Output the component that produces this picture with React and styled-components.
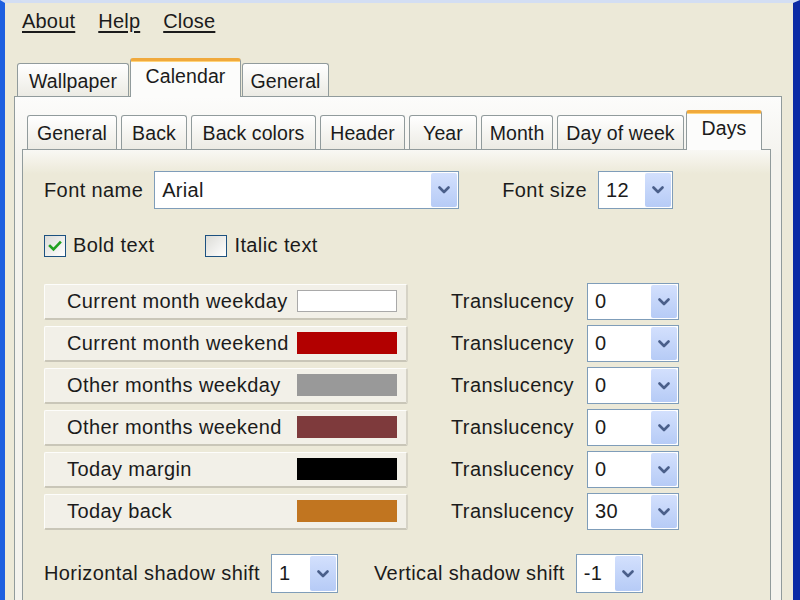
import React from "react";
import styled, { createGlobalStyle, css } from "styled-components";

const Global = createGlobalStyle`
  html, body { margin: 0; padding: 0; background: #ece9d8; }
  * { box-sizing: border-box; }
`;

const Window = styled.div`
  width: 800px;
  height: 600px;
  overflow: hidden;
  display: flex;
  flex-direction: column;
  background: #ece9d8;
  border-left: 5px solid #1d5fe0;
  border-right: 7px solid #0b2aa5;
  border-top: 3px solid #d3def3;
  font-family: "Liberation Sans", Arial, sans-serif;
  color: #1b1b1b;
`;

const MenuBar = styled.div`
  height: 55px;
  display: flex;
  gap: 23px;
  padding: 7px 0 0 17px;
  font-size: 20px;
`;

const MenuItem = styled.span`
  text-decoration: underline;
  text-underline-offset: 3px;
  letter-spacing: 0.2px;
`;

const TabStrip = styled.div`
  position: relative;
  z-index: 1;
  display: flex;
  align-items: flex-end;
  gap: ${(p) => p.$gap}px;
  padding-left: ${(p) => p.$left}px;
  margin-bottom: -1px;
`;

const Tab = styled.div`
  width: ${(p) => p.$w}px;
  display: flex;
  align-items: center;
  justify-content: center;
  font-size: 19.5px;
  letter-spacing: 0.1px;
  border: 1px solid #919b9c;
  border-bottom: none;
  border-radius: 3px 3px 0 0;
  ${(p) =>
    p.$active
      ? css`
          height: ${p.$h + 6}px;
          margin-left: ${p.$pull}px;
          background: #fcfcfb;
          border-top: 3px solid #f0a93c;
          padding-bottom: 6px;
          box-shadow: inset 0 1px 0 #ffd37a;
        `
      : css`
          height: ${p.$h}px;
          margin-bottom: 1px;
          background: linear-gradient(#ffffff, #ecebe4);
          padding-top: 2px;
        `}
`;

const OuterPanel = styled.div`
  flex: 1;
  margin-left: 9px;
  width: 768px;
  display: flex;
  flex-direction: column;
  border: 1px solid #919b9c;
  border-bottom: none;
  background: linear-gradient(#fcfcfb, #f4f3ee 60px);
  padding: 13px 10px 0 7px;
`;

const InnerPanel = styled.div`
  flex: 1;
  border: 1px solid #919b9c;
  border-bottom: none;
  background: linear-gradient(#f9f8f4, #ece9d8 24px);
  padding: 21px 0 0 21px;
  display: flex;
  flex-direction: column;
`;

const Row = styled.div`
  display: flex;
  align-items: center;
  gap: ${(p) => p.$gap}px;
  margin-top: ${(p) => p.$top || 0}px;
`;

const Field = styled.div`
  display: flex;
  align-items: center;
  gap: 11px;
`;

const Label = styled.span`
  font-size: 20px;
  letter-spacing: 0.4px;
  white-space: nowrap;
`;

const ComboBox = styled.div`
  width: ${(p) => p.$w}px;
  height: ${(p) => p.$h || 38}px;
  border: 1px solid #7f9db9;
  background: #fff;
  display: flex;
  align-items: center;
  justify-content: space-between;
  padding: 1px;
  font-size: 20px;
`;

const ComboText = styled.span`
  padding-left: 6px;
  letter-spacing: 0.3px;
`;

const ArrowButton = styled.div`
  width: 26px;
  height: 100%;
  border-radius: 2px;
  background: linear-gradient(#d3e0fd, #b6cbf6);
  display: flex;
  align-items: center;
  justify-content: center;
`;

const CheckGroup = styled.div`
  display: flex;
  align-items: center;
  gap: 7px;
`;

const CheckBox = styled.div`
  width: 22px;
  height: 22px;
  border: 1px solid #1c5180;
  background: linear-gradient(135deg, #dcdcd7, #ffffff);
  display: flex;
  align-items: center;
  justify-content: center;
`;

const ColorGrid = styled.div`
  display: flex;
  flex-direction: column;
  gap: 6px;
  margin-top: 26px;
`;

const ColorRow = styled.div`
  display: grid;
  grid-template-columns: 364px 179px 92px;
  align-items: center;
  height: 36px;
`;

const TransLabel = styled(Label)`
  padding-left: 43px;
`;

const ColorButton = styled.div`
  height: 36px;
  display: flex;
  align-items: center;
  justify-content: space-between;
  padding: 0 9px 0 22px;
  background: #f2f0e8;
  border: 1px solid #fdfdfb;
  border-bottom: 2px solid #c9c6b8;
  border-right: 2px solid #d6d3c6;
  border-radius: 2px;
`;

const Swatch = styled.div`
  width: 100px;
  height: 22px;
  background: ${(p) => p.$color};
  border: 1px solid ${(p) => (p.$color === "#ffffff" ? "#a9a9a9" : p.$color)};
`;

const Chevron = () => (
  <svg width="12" height="8" viewBox="0 0 12 8">
    <path d="M1.5 1.5 L6 6 L10.5 1.5" fill="none" stroke="#4a5f8a" strokeWidth="2.6" strokeLinecap="round" strokeLinejoin="round" />
  </svg>
);

const Combo = ({ w, h, value }) => (
  <ComboBox $w={w} $h={h}>
    <ComboText>{value}</ComboText>
    <ArrowButton>
      <Chevron />
    </ArrowButton>
  </ComboBox>
);

const Check = ({ checked, label }) => (
  <CheckGroup>
    <CheckBox>
      {checked && (
        <svg width="14" height="12" viewBox="0 0 14 12">
          <path d="M2 6 L5.5 9.5 L12 2.5" fill="none" stroke="#21a121" strokeWidth="2.6" strokeLinecap="square" />
        </svg>
      )}
    </CheckBox>
    <Label>{label}</Label>
  </CheckGroup>
);

const colors = [
  ["Current month weekday", "#ffffff", "0"],
  ["Current month weekend", "#b20000", "0"],
  ["Other months weekday", "#999999", "0"],
  ["Other months weekend", "#7e3a3c", "0"],
  ["Today margin", "#000000", "0"],
  ["Today back", "#c17520", "30"],
];

const outerTabs = [
  ["Wallpaper", 112],
  ["Calendar", 111, true],
  ["General", 87],
];

const innerTabs = [
  ["General", 90],
  ["Back", 66],
  ["Back colors", 125],
  ["Header", 85],
  ["Year", 68],
  ["Month", 72],
  ["Day of week", 127],
  ["Days", 76, true],
];

export default function App() {
  return (
    <>
      <Global />
      <Window>
        <MenuBar>
          <MenuItem>About</MenuItem>
          <MenuItem>Help</MenuItem>
          <MenuItem>Close</MenuItem>
        </MenuBar>
        <TabStrip $gap={1} $left={12}>
          {outerTabs.map(([t, w, a]) => (
            <Tab key={t} $w={w} $h={33} $active={a} $pull={0}>
              {t}
            </Tab>
          ))}
        </TabStrip>
        <OuterPanel>
          <TabStrip $gap={4} $left={5}>
            {innerTabs.map(([t, w, a]) => (
              <Tab key={t} $w={w} $h={34} $active={a} $pull={-2}>
                {t}
              </Tab>
            ))}
          </TabStrip>
          <InnerPanel>
            <Row $gap={43}>
              <Field>
                <Label>Font name</Label>
                <Combo w={305} value="Arial" />
              </Field>
              <Field>
                <Label>Font size</Label>
                <Combo w={75} value="12" />
              </Field>
            </Row>
            <Row $gap={51} $top={25}>
              <Check checked label="Bold text" />
              <Check label="Italic text" />
            </Row>
            <ColorGrid>
              {colors.map(([name, c, v]) => (
                <ColorRow key={name}>
                  <ColorButton>
                    <Label>{name}</Label>
                    <Swatch $color={c} />
                  </ColorButton>
                  <TransLabel>Translucency</TransLabel>
                  <Combo w={92} h={37} value={v} />
                </ColorRow>
              ))}
            </ColorGrid>
            <Row $gap={36} $top={25}>
              <Field>
                <Label>Horizontal shadow shift</Label>
                <Combo w={67} h={39} value="1" />
              </Field>
              <Field>
                <Label>Vertical shadow shift</Label>
                <Combo w={67} h={39} value="-1" />
              </Field>
            </Row>
          </InnerPanel>
        </OuterPanel>
      </Window>
    </>
  );
}
